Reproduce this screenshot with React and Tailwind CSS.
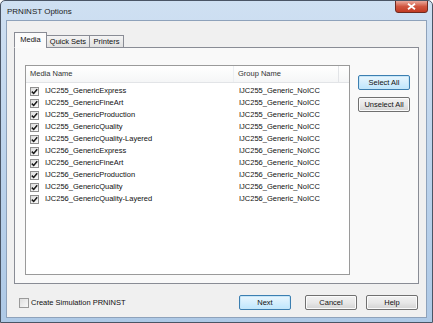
import React, { useState } from 'react';

const rows = [
  ['IJC255_GenericExpress', 'IJC255_Generic_NoICC'],
  ['IJC255_GenericFineArt', 'IJC255_Generic_NoICC'],
  ['IJC255_GenericProduction', 'IJC255_Generic_NoICC'],
  ['IJC255_GenericQuality', 'IJC255_Generic_NoICC'],
  ['IJC255_GenericQuality-Layered', 'IJC255_Generic_NoICC'],
  ['IJC256_GenericExpress', 'IJC256_Generic_NoICC'],
  ['IJC256_GenericFineArt', 'IJC256_Generic_NoICC'],
  ['IJC256_GenericProduction', 'IJC256_Generic_NoICC'],
  ['IJC256_GenericQuality', 'IJC256_Generic_NoICC'],
  ['IJC256_GenericQuality-Layered', 'IJC256_Generic_NoICC'],
];

function CheckBox({ checked }) {
  return (
    <div className="w-[9px] h-[9px] border border-[#8f8f8f] bg-gradient-to-br from-[#dcdcdc] to-[#fbfbfb] flex items-center justify-center shrink-0">
      {checked && (
        <svg width="7" height="7" viewBox="0 0 7 7">
          <path d="M0.8 3.6 L2.7 5.5 L6.2 1.2" stroke="#1a1a1a" strokeWidth="1.5" fill="none" />
        </svg>
      )}
    </div>
  );
}

function Btn({ children, primary, className = '' }) {
  return (
    <button
      className={`h-[15px] w-[52px] rounded-[2px] border text-[7.5px] text-[#111] flex items-center justify-center ${
        primary
          ? 'border-[#3c7fb1] bg-gradient-to-b from-[#eaf6fd] to-[#bee6fd] shadow-[inset_0_0_0_1px_#c6e6f8]'
          : 'border-[#707070] bg-gradient-to-b from-[#f2f2f2] via-[#e8e8e8] to-[#d3d3d3] shadow-[inset_0_0_0_1px_#fbfbfb]'
      } ${className}`}
    >
      {children}
    </button>
  );
}

export default function App() {
  const [tab, setTab] = useState('Media');
  const tabs = ['Media', 'Quick Sets', 'Printers'];

  return (
    <div
      className="w-[433px] h-[323px] border border-[#4a5565] rounded-t-[5px] bg-gradient-to-b from-[#cfe0f2] via-[#bcd3ec] to-[#aec9e6] flex flex-col overflow-hidden"
      style={{ fontFamily: '"Liberation Sans", Arial, sans-serif' }}
    >
      {/* title bar */}
      <div className="h-[19px] flex items-start justify-between pl-[6px] pr-[4px] shrink-0">
        <div className="text-[8px] text-[#1b1b1b] pt-[5px]">PRNINST Options</div>
        <div className="w-[33px] h-[13px] mt-[-1px] rounded-b-[3px] border border-[#6e2a20] bg-gradient-to-b from-[#e9a89c] via-[#d0553f] to-[#c23a22] flex items-center justify-center">
          <svg width="9" height="7" viewBox="0 0 9 7">
            <path d="M1 0.8 L8 6.2 M8 0.8 L1 6.2" stroke="#fff" strokeWidth="1.8" />
          </svg>
        </div>
      </div>

      {/* client area */}
      <div className="mx-[5px] h-[298px] bg-[#f0f0f0] border border-[#8ea2bb] flex flex-col px-[7px] pt-[11px]">
        {/* tabs */}
        <div className="flex items-end h-[16px] relative z-10">
          {tabs.map((t) => (
            <div
              key={t}
              onClick={() => setTab(t)}
              className={`text-[7.5px] text-[#111] border border-[#898c95] flex items-center justify-center ${
                t === tab
                  ? 'h-[16px] bg-[#fbfbfb] border-b-[#fbfbfb] w-[33px]'
                  : 'h-[13px] -ml-px bg-gradient-to-b from-[#f4f4f4] to-[#e1e1e1]'
              } ${t === 'Quick Sets' ? 'w-[44px]' : ''} ${t === 'Printers' ? 'w-[35px]' : ''}`}
            >
              {t}
            </div>
          ))}
        </div>

        {/* tab panel */}
        <div className="-mt-px w-[405px] h-[237px] bg-[#f9f9f9] border border-[#898c95] flex pl-[10px] pt-[17px]">
          {/* list */}
          <div className="w-[325px] h-[210px] bg-white border border-[#9a9a9a] flex flex-col">
            <div className="h-[17px] flex items-center text-[7.5px] text-[#333] bg-gradient-to-b from-white to-[#f5f6f7] border-b border-[#e2e4e7]">
              <div className="w-[208px] pl-[4px] h-full flex items-center border-r border-[#eceff2]">Media Name</div>
              <div className="w-[105px] pl-[4px] h-full flex items-center border-r border-[#e2e4e7]">Group Name</div>
            </div>
            <div className="flex flex-col pt-[2px]">
              {rows.map(([name, group]) => (
                <div key={name} className="h-[12px] flex items-center text-[7.5px] text-[#111]">
                  <div className="w-[208px] flex items-center pl-[4px] gap-[6px]">
                    <CheckBox checked />
                    <span>{name}</span>
                  </div>
                  <div className="pl-[5px]">{group}</div>
                </div>
              ))}
            </div>
          </div>

          {/* side buttons */}
          <div className="flex flex-col gap-[7px] ml-[8px] pt-[10px]">
            <Btn primary>Select All</Btn>
            <Btn>Unselect All</Btn>
          </div>
        </div>

        {/* bottom row */}
        <div className="flex items-center mt-[11px]">
          <div className="flex items-center gap-[2px] ml-[5px]">
            <div className="w-[10px] h-[10px] border border-[#9a9a9a] bg-gradient-to-br from-[#dedede] to-[#f8f8f8]" />
            <span className="text-[7.5px] text-[#111]">Create Simulation PRNINST</span>
          </div>
          <div className="flex ml-auto mr-[1px] gap-[14px]">
            <Btn primary>Next</Btn>
            <Btn>Cancel</Btn>
            <Btn className="-ml-[5px]">Help</Btn>
          </div>
        </div>
      </div>
    </div>
  );
}
